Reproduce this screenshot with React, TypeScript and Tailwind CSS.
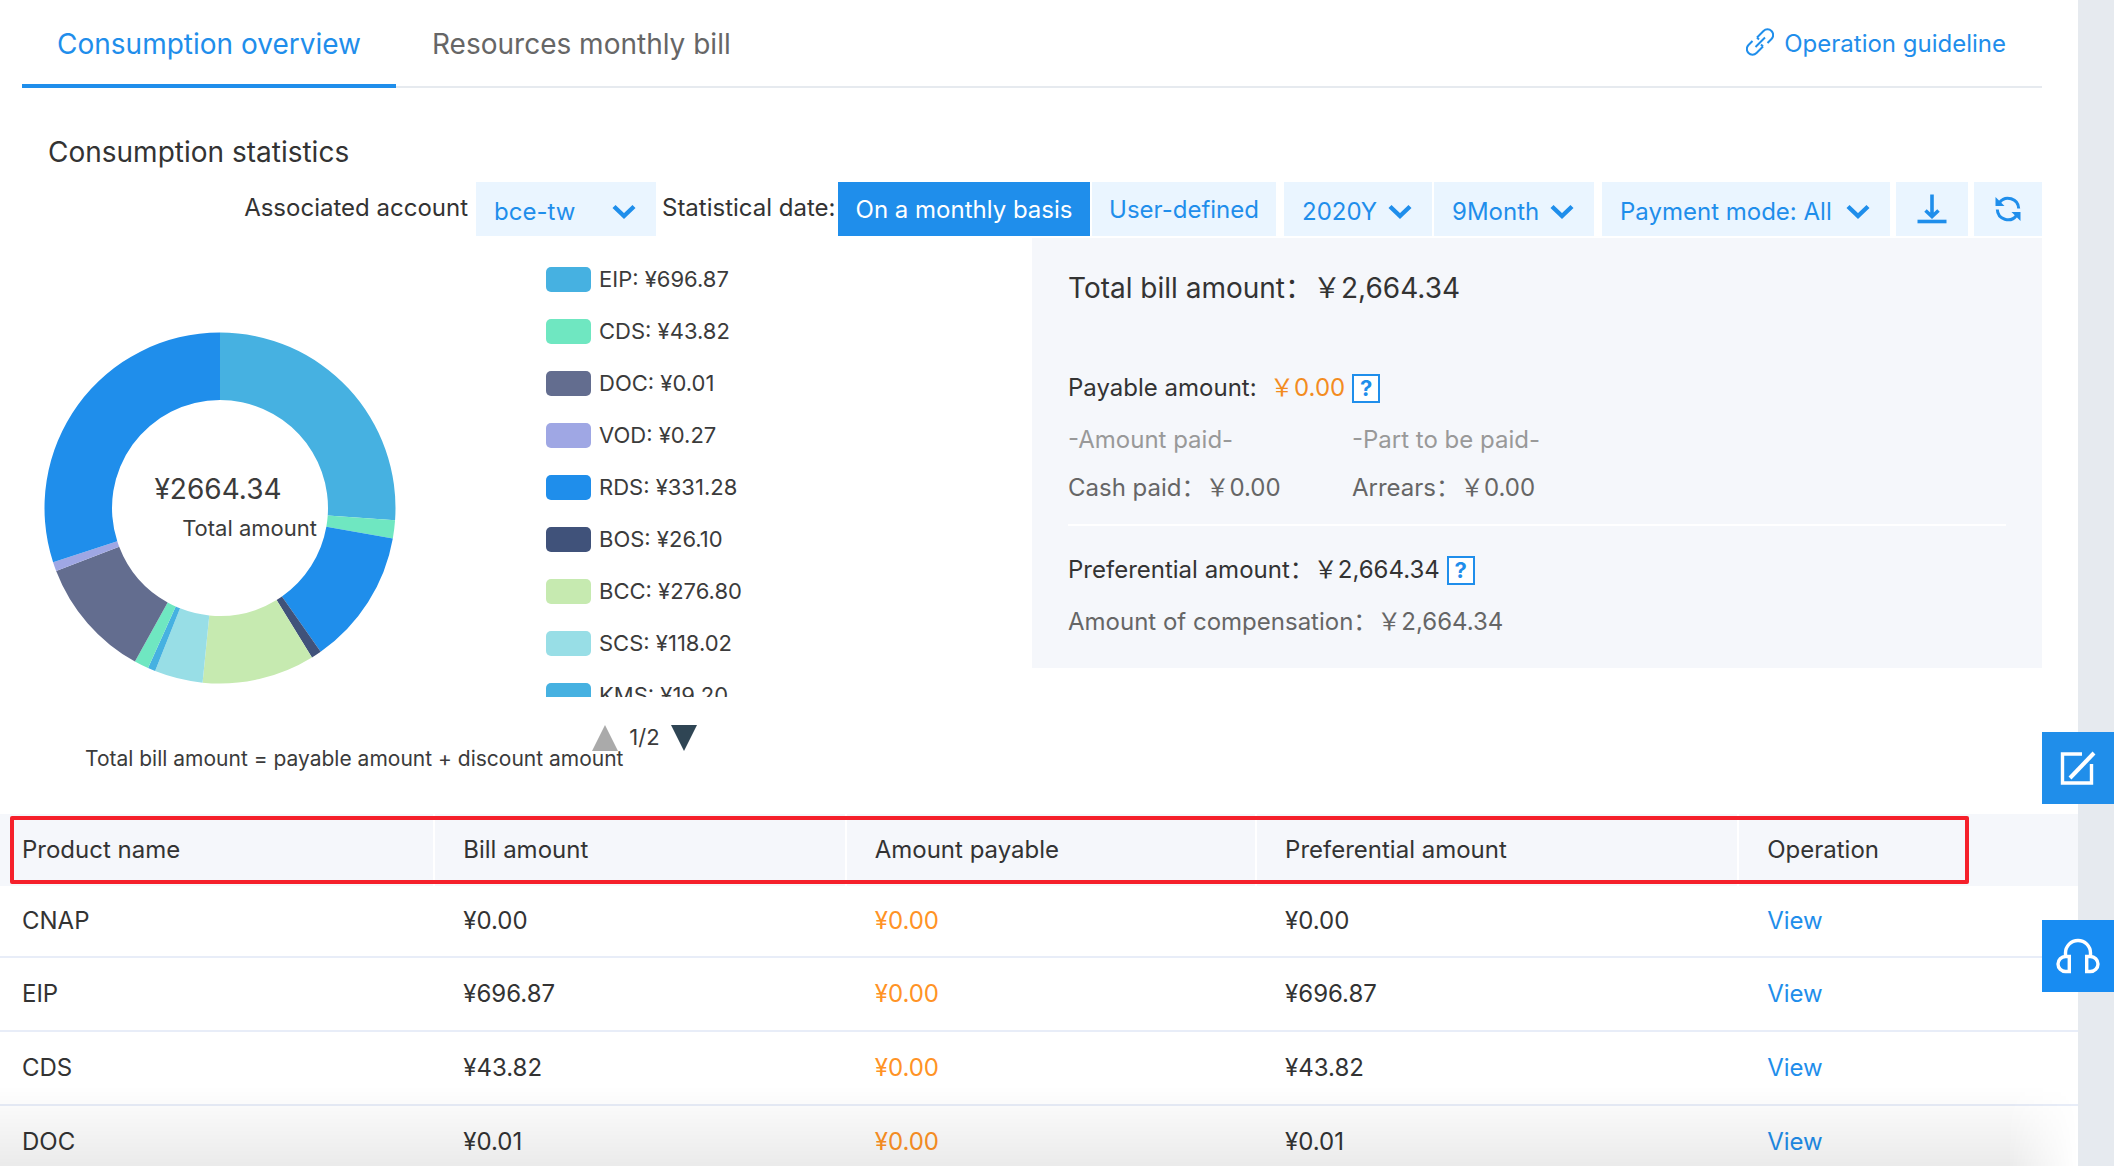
import React from 'react';

const filterBox = "h-[54px] bg-[#eaf5ff] text-[#1f8eeb] text-2xl";

// end angle of each slice, clockwise from the top
const slices = [
    { end: 94, color: '#46b1e1' },
    { end: 100, color: '#6fe7c1' },
    { end: 145, color: '#1f8eeb' },
    { end: 148.4, color: '#40527a' },
    { end: 185.7, color: '#c6eab0' },
    { end: 201.7, color: '#98dee6' },
    { end: 204.2, color: '#46b1e1' },
    { end: 209, color: '#6fe7c1' },
    { end: 249, color: '#636d8f' },
    { end: 252, color: '#9fa7e4' },
    { end: 360, color: '#1f8eeb' },
];

const legend = [
    { name: 'EIP', amount: '696.87', color: 'bg-[#46b1e1]' },
    { name: 'CDS', amount: '43.82', color: 'bg-[#6fe7c1]' },
    { name: 'DOC', amount: '0.01', color: 'bg-[#636d8f]' },
    { name: 'VOD', amount: '0.27', color: 'bg-[#9fa7e4]' },
    { name: 'RDS', amount: '331.28', color: 'bg-[#1f8eeb]' },
    { name: 'BOS', amount: '26.10', color: 'bg-[#40527a]' },
    { name: 'BCC', amount: '276.80', color: 'bg-[#c6eab0]' },
    { name: 'SCS', amount: '118.02', color: 'bg-[#98dee6]' },
    { name: 'KMS', amount: '19.20', color: 'bg-[#46b1e1]' },
];

const rows = [
    { product: 'CNAP', bill: '¥0.00', payable: '¥0.00', preferential: '¥0.00' },
    { product: 'EIP', bill: '¥696.87', payable: '¥0.00', preferential: '¥696.87' },
    { product: 'CDS', bill: '¥43.82', payable: '¥0.00', preferential: '¥43.82' },
    { product: 'DOC', bill: '¥0.01', payable: '¥0.00', preferential: '¥0.01' },
];

function point(angle: number, r: number) {
    const a = (angle * Math.PI) / 180;
    return `${(176 + r * Math.sin(a)).toFixed(2)} ${(176 - r * Math.cos(a)).toFixed(2)}`;
}

function ringPath(start: number, end: number) {
    const large = end - start > 180 ? 1 : 0;
    return `M${point(start, 175.5)} A175.5 175.5 0 ${large} 1 ${point(end, 175.5)} L${point(end, 108)} A108 108 0 ${large} 0 ${point(start, 108)} Z`;
}

function Donut() {
    return (
        <svg viewBox="0 0 352 352" className="w-[352px] h-[352px] shrink-0">
            {slices.map((s, i) => (
                <path key={i} d={ringPath(i === 0 ? 0 : slices[i - 1].end, s.end)} fill={s.color} />
            ))}
            <text x="174" y="167" textAnchor="middle" fontSize="28" fill="#3b3b3b">¥2664.34</text>
            <text x="273" y="204" textAnchor="end" fontSize="22" fill="#3b3b3b">Total amount</text>
        </svg>
    );
}

function Chevron() {
    return (
        <svg viewBox="0 0 24 16" className="absolute top-[22px] right-5 w-6 h-4 pointer-events-none">
            <path d="M2 2.5 L12 12 L22 2.5" fill="none" stroke="#1f8eeb" strokeWidth="4.4" />
        </svg>
    );
}

type FilterSelectProps = { label: string; value: string; className: string };

function FilterSelect({ label, value, className }: FilterSelectProps) {
    return (
        <div className={`relative shrink-0 ${className}`}>
            <select aria-label={label} className={`w-full appearance-none outline-none pt-1.5 pl-[18px] ${filterBox}`}>
                <option>{value}</option>
            </select>
            <Chevron />
        </div>
    );
}

function Help({ label }: { label: string }) {
    return (
        <button aria-label={label} className="ml-[7px] w-7 h-[29px] border-2 border-[#1f8eeb] bg-white text-[#1f8eeb] text-[22px] leading-6 font-bold shrink-0">
            ?
        </button>
    );
}

function Tabs() {
    return (
        <div className="ml-[22px] mr-9 h-[88px] flex border-b-2 border-[#e6eaef]">
            <button className="w-[374px] h-[88px] pt-1 shrink-0 text-[28px] text-[#1f8eeb] border-b-4 border-[#1f8eeb]">
                Consumption overview
            </button>
            <button className="ml-9 h-[88px] shrink-0 text-[28px] text-[#666]">
                Resources monthly bill
            </button>
            <a href="#guideline" className="ml-auto mr-9 h-[88px] flex items-center gap-2.5 text-2xl text-[#1f8eeb]">
                <svg viewBox="0 0 28 28" className="w-7 h-7 mb-1" fill="none" stroke="currentColor" strokeWidth="2">
                    <path d="M11 9.5 L17.5 3 A5.4 5.4 0 0 1 25.5 11 L21.5 15" />
                    <path d="M17 18.5 L10.5 25 A5.4 5.4 0 0 1 2.5 17 L6.5 13" />
                    <path d="M9.5 19 L19 9.5" />
                    <path d="M11 9.5 L13 11.5 M17 18.5 L15 16.5" />
                </svg>
                Operation guideline
            </a>
        </div>
    );
}

function Filters() {
    return (
        <div className="mr-9 flex justify-end text-2xl text-[#333]">
            <span className="pt-2.5 mr-2">Associated account</span>
            <FilterSelect label="Associated account" value="bce-tw" className="w-[180px]" />
            <span className="pt-2.5 ml-1.5 w-44 whitespace-nowrap">Statistical date:</span>
            <button className="w-[252px] h-[54px] pt-0.5 shrink-0 bg-[#1f8eeb] text-white">On a monthly basis</button>
            <button className={`ml-0.5 w-[184px] pt-0.5 shrink-0 ${filterBox}`}>User-defined</button>
            <FilterSelect label="Year" value="2020Y" className="ml-2 w-[148px]" />
            <FilterSelect label="Month" value="9Month" className="ml-0.5 w-40" />
            <FilterSelect label="Payment mode" value="Payment mode: All" className="ml-2 w-72" />
            <button aria-label="Download" className={`ml-1.5 w-[72px] shrink-0 flex items-center justify-center ${filterBox}`}>
                <svg viewBox="0 0 30 30" className="w-[30px] h-[30px]" fill="none" stroke="currentColor">
                    <path d="M15 0.5 V22 M8.5 16.5 L15 22.5 L21.5 16.5" strokeWidth="3.6" />
                    <path d="M0.5 27.5 H29.5" strokeWidth="3.6" />
                </svg>
            </button>
            <button aria-label="Refresh" className={`ml-1.5 w-[68px] shrink-0 flex items-center justify-center ${filterBox}`}>
                <svg viewBox="0 0 26 26" className="w-[26px] h-[26px]" fill="none" stroke="currentColor" strokeWidth="3">
                    <path d="M4.5 6.5 A10.7 10.7 0 0 1 23.7 12.5" />
                    <path d="M21.5 19.5 A10.7 10.7 0 0 1 2.3 13.5" />
                    <path d="M0.5 1 V10 H9.5 Z" fill="currentColor" stroke="none" />
                    <path d="M25.5 25 V16 H16.5 Z" fill="currentColor" stroke="none" />
                </svg>
            </button>
        </div>
    );
}

function Legend() {
    return (
        <div className="ml-[150px] w-[230px] shrink-0">
            <ul className="h-[446px] pt-0.5 overflow-hidden">
                {legend.map((item) => (
                    <li key={item.name} className="h-[52px] flex items-center gap-2 text-[22px] text-[#3b3b3b] whitespace-nowrap">
                        <span className={`w-[45px] h-[25px] rounded-[5px] shrink-0 ${item.color}`} />
                        {item.name}: ¥{item.amount}
                    </li>
                ))}
            </ul>
            <div className="mt-[27px] ml-[46px] flex items-center h-[27px] text-[22px] text-[#3b3b3b]">
                <button aria-label="Previous page">
                    <svg viewBox="0 0 26 26" className="w-[26px] h-[26px] block"><path d="M13 0 L26 26 H0 Z" fill="#aaa" /></svg>
                </button>
                <span className="w-[53px] text-center">1/2</span>
                <button aria-label="Next page">
                    <svg viewBox="0 0 26 26" className="w-[26px] h-[26px] block"><path d="M0 0 H26 L13 26 Z" fill="#2f4554" /></svg>
                </button>
            </div>
        </div>
    );
}

function Summary() {
    return (
        <section className="flex-1 mt-0.5 max-w-[1010px] ml-auto mr-9 px-9 pt-[30px] pb-7 bg-[#f5f7fb] text-2xl leading-9 text-[#333]">
            <h3 className="text-[28px] leading-10">Total bill amount：￥2,664.34</h3>
            <div className="mt-[62px] flex items-center">
                Payable amount:&nbsp;&nbsp;<span className="text-[#f38c1f]">￥0.00</span>
                <Help label="About payable amount" />
            </div>
            <div className="mt-4 grid grid-cols-[284px_1fr] gap-y-3">
                <span className="text-[#999]">-Amount paid-</span>
                <span className="text-[#999]">-Part to be paid-</span>
                <span className="text-[#666]">Cash paid：￥0.00</span>
                <span className="text-[#666]">Arrears：￥0.00</span>
            </div>
            <hr className="mt-[18px] border-0 h-0.5 bg-white" />
            <div className="mt-[26px] flex items-center">
                Preferential amount：￥2,664.34
                <Help label="About preferential amount" />
            </div>
            <p className="mt-4 text-[#666]">Amount of compensation：￥2,664.34</p>
        </section>
    );
}

function BillTable() {
    const head = "h-[72px] pl-7 text-left font-normal border-l-2 border-white";
    const cell = "pl-[30px]";
    return (
        <div className="relative mt-[43px]">
            <table className="w-full table-fixed border-separate border-spacing-0 text-2xl text-[#333]">
                <colgroup>
                    <col className="w-[20.85%]" />
                    <col className="w-[19.8%]" />
                    <col className="w-[19.75%]" />
                    <col className="w-[23.2%]" />
                    <col />
                </colgroup>
                <thead className="bg-[#f5f7fb]">
                    <tr>
                        <th className="h-[72px] pl-[22px] text-left font-normal">Product name</th>
                        <th className={head}>Bill amount</th>
                        <th className={head}>Amount payable</th>
                        <th className={head}>Preferential amount</th>
                        <th className={head}>Operation</th>
                    </tr>
                </thead>
                <tbody className="[&_td]:border-b-2 [&_td]:border-[#e8edf8] [&_td]:h-[74px] [&>tr:first-child>td]:h-[72px]">
                    {rows.map((row) => (
                        <tr key={row.product}>
                            <td className="pl-[22px]">{row.product}</td>
                            <td className={cell}>{row.bill}</td>
                            <td className={`${cell} text-[#ff9326]`}>{row.payable}</td>
                            <td className={cell}>{row.preferential}</td>
                            <td className={cell}>
                                <a href={`#${row.product}`} className="text-[#1f8eeb]">View</a>
                            </td>
                        </tr>
                    ))}
                </tbody>
            </table>
            {/* highlight around the column titles */}
            <div className="absolute top-0.5 left-2.5 right-[109px] h-[68px] border-4 border-[#f5202b] rounded-xs pointer-events-none" />
        </div>
    );
}

function FloatingActions() {
    return (
        <>
            <button aria-label="Feedback" className="fixed right-0 top-[732px] w-[72px] h-[72px] flex items-center justify-center bg-[#208eea]">
                <svg viewBox="0 0 36 36" className="w-9 h-9" fill="none" stroke="#fff" strokeWidth="4">
                    <path d="M22 4 H2.5 V33 H31.5 V14" strokeWidth="3.4" />
                    <path d="M10 28 L34 3" />
                </svg>
            </button>
            <button aria-label="Support" className="fixed right-0 top-[920px] w-[72px] h-[72px] flex items-center justify-center bg-[#188cf2]">
                <svg viewBox="0 0 44 36" className="w-11 h-9" fill="none" stroke="#fff" strokeWidth="3.4">
                    <path d="M9.5 19 V15 A12.5 12.5 0 0 1 34.5 15 V19" />
                    <path d="M13.3 18.5 H9.5 A7.3 7.3 0 0 0 9.5 33.5 H13.3 Z" />
                    <path d="M30.7 18.5 H34.5 A7.3 7.3 0 0 1 34.5 33.5 H30.7 Z" />
                </svg>
            </button>
        </>
    );
}

export default function App() {
    return (
        <div className="h-screen overflow-hidden bg-[#e6eaef] pr-9 font-['Inter','Noto_Sans_CJK_SC',sans-serif]">
            <main className="relative h-full overflow-hidden bg-white">
                <Tabs />
                <h2 className="ml-12 mt-11 text-[28px] leading-10 text-[#333]">Consumption statistics</h2>
                <div className="mt-2.5">
                    <Filters />
                </div>
                <div className="flex items-start">
                    <div>
                        <div className="flex">
                            <div className="ml-11 pt-24 shrink-0">
                                <Donut />
                            </div>
                            <div className="pt-[15px]">
                                <Legend />
                            </div>
                        </div>
                        <p className="-mt-1 ml-[85px] text-[21px] leading-6 text-[#3b3b3b]">
                            Total bill amount = payable amount + discount amount
                        </p>
                    </div>
                    <Summary />
                </div>
                <BillTable />
                <div className="absolute bottom-0 left-0 right-0 h-20 bg-gradient-to-t from-black/8 to-transparent pointer-events-none [mask-image:linear-gradient(to_left,transparent,black_70px)]" />
            </main>
            <FloatingActions />
        </div>
    );
}
